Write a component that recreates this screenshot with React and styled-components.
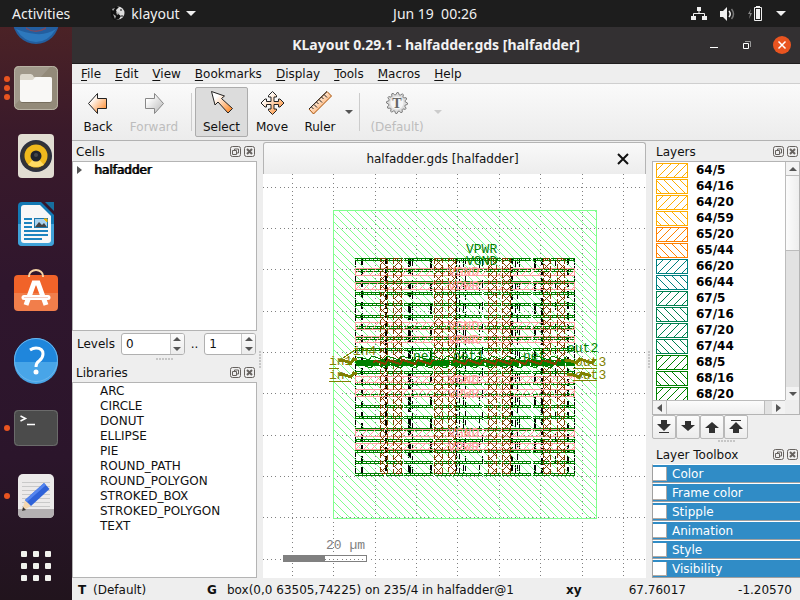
import React from "react";
import styled, { createGlobalStyle, css } from "styled-components";

const Global = createGlobalStyle`
  *, *::before, *::after { box-sizing: border-box; }
  html, body, #root { height: 100%; }
  body { margin: 0; overflow: hidden; background: #eeeeee; color: #111; font: 12px/16px "DejaVu Sans", sans-serif; }
  button, input { font: inherit; color: inherit; margin: 0; padding: 0; border: 0; background: none; }
  ul { margin: 0; padding: 0; list-style: none; }
  svg { display: block; flex: none; }
`;

/* ---------- frame ---------- */
const Screen = styled.div`
  display: flex;
  flex-direction: column;
  height: 100vh;
`;
const TopBar = styled.header`
  display: grid;
  grid-template-columns: 1fr auto 1fr;
  align-items: center;
  flex: none;
  height: 27px;
  padding: 0 14px 0 12px;
  background: #1d1d1d;
  color: #f0f0f0;
  font: 14px/20px "Noto Sans", sans-serif;
`;
const BarGroup = styled.div`
  display: flex;
  align-items: center;
  justify-content: ${(p) => (p.$end ? "flex-end" : "flex-start")};
  gap: ${(p) => (p.$end ? "13px" : "40px")};
`;
const BarButton = styled.button`
  display: flex;
  align-items: center;
  gap: 6px;
  white-space: pre;
`;
/* The clock is centred over the work area, which starts right of the dock. */
const Clock = styled(BarButton)`
  margin-left: 72px;
`;
const Desktop = styled.div`
  display: flex;
  flex: 1;
  min-height: 0;
`;
const Dock = styled.nav`
  flex: none;
  width: 72px;
  overflow: hidden;
  background: linear-gradient(#4b2226, #3a1a2a 18%, #2f162d 45%, #2b152b 75%, #21141d);
`;
const DockItem = styled.button`
  display: flex;
  align-items: center;
  width: 72px;
  height: 68px;
`;
const DockPeek = styled.button`
  display: flex;
  width: 72px;
  height: 27px;
  padding-left: 12px;
  overflow: hidden;
`;
const Running = styled.span`
  display: flex;
  flex-direction: column;
  align-items: flex-end;
  gap: 3px;
  width: 10px;
  margin-right: 2px;
`;
const Dot = styled.i`
  width: 6px;
  height: 6px;
  border-radius: 50%;
  background: #e95420;
`;
const Window = styled.main`
  display: flex;
  flex-direction: column;
  flex: 1;
  min-width: 0;
  background: #eeeeee;
`;
const TitleBar = styled.div`
  display: grid;
  grid-template-columns: 1fr auto 1fr;
  align-items: center;
  flex: none;
  height: 37px;
  padding: 0 9px;
  background: #333032;
  border-bottom: 1px solid #1e1c1d;
  color: #f2f2f2;
`;
const Title = styled.h1`
  grid-column: 2;
  margin: 0;
  font: bold 14px/20px "Noto Sans", sans-serif;
`;
const WindowButtons = styled.div`
  display: flex;
  align-items: center;
  justify-content: flex-end;
  gap: 19px;
`;

/* ---------- menu and toolbar ---------- */
const MenuBar = styled.nav`
  display: flex;
  flex: none;
  height: 20px;
  padding-left: 2px;
  border-bottom: 1px solid #cfcfcf;
`;
const MenuButton = styled.button`
  padding: 0 7px;
  line-height: 18px;
  u { text-underline-offset: 2px; }
`;
const ToolBar = styled.div`
  display: flex;
  flex: none;
  align-items: center;
  height: 57px;
  padding-left: 2px;
  background: linear-gradient(#fafafa, #ececec);
  border-bottom: 1px solid #b2b2b2;
`;
const ToolButton = styled.button`
  display: flex;
  flex-direction: column;
  align-items: center;
  gap: 3px;
  width: ${(p) => p.$w}px;
  height: 50px;
  padding-top: 2px;
  border: 1px solid transparent;
  border-radius: 2px;
  white-space: nowrap;
  ${(p) => p.$on && css`background: #dcdcdc; border-color: #acacac;`}
  ${(p) => p.disabled && css`color: #bdbdbd;`}
`;
const DropButton = styled.button`
  display: flex;
  align-items: center;
  justify-content: center;
  width: ${(p) => p.$w}px;
  height: 50px;
`;
const Divider = styled.i`
  width: 1px;
  height: 38px;
  margin: 0 ${(p) => p.$right}px 0 5px;
  background: #cccccc;
`;

/* ---------- docks ---------- */
const Work = styled.div`
  display: flex;
  flex: 1;
  min-height: 0;
`;
const Side = styled.aside`
  display: flex;
  flex-direction: column;
  flex: none;
  width: ${(p) => p.$w}px;
`;
const PanelHead = styled.div`
  display: flex;
  align-items: center;
  gap: 2px;
  flex: none;
  height: 20px;
  padding: 2px 1px 0 4px;
  h2 { flex: 1; margin: 0; font: inherit; }
`;
const Tree = styled.ul`
  flex: ${(p) => p.$grow};
  min-height: 0;
  overflow: hidden;
  background: #fff;
  border: 1px solid #b4b4b4;
`;
const TreeItem = styled.li`
  display: flex;
  align-items: center;
  gap: 12px;
  height: 15px;
  padding-left: ${(p) => p.$indent}px;
`;
const StrongName = styled.span`
  color: #000;
  text-shadow: 1px 0 0 #000;
`;
const Levels = styled.div`
  display: flex;
  align-items: center;
  flex: none;
  height: 26px;
  padding: 0 1px 0 5px;
  gap: 6px;
`;
const Spin = styled.span`
  display: flex;
  width: ${(p) => p.$w}px;
  height: 22px;
  overflow: hidden;
  background: #fff;
  border: 1px solid #b0b0b0;
  border-radius: 3px;
  input { flex: 1; min-width: 0; padding-left: 4px; }
`;
const SpinButtons = styled.span`
  display: flex;
  flex-direction: column;
  width: 14px;
  background: linear-gradient(#fcfcfc, #ececec);
  border-left: 1px solid #c6c6c6;
  button { display: flex; flex: 1; align-items: center; justify-content: center; }
`;
const Grip = styled.i`
  flex: none;
  align-self: center;
  width: ${(p) => (p.$v ? 3 : 17)}px;
  height: ${(p) => (p.$v ? 17 : 3)}px;
  margin: ${(p) => (p.$v ? "0" : "1px 0")};
  background: radial-gradient(circle at 1px 1px, #c6c6c6 1px, transparent 1px) 0 0 / 3px 3px;
`;
const Splitter = styled.div`
  display: flex;
  flex: none;
  justify-content: center;
  width: 6px;
`;
const Center = styled.section`
  display: flex;
  flex-direction: column;
  flex: 1;
  min-width: 0;
  padding-top: 1px;
`;
const Tab = styled.div`
  display: flex;
  align-items: center;
  flex: none;
  height: 32px;
  padding: 0 16px 0 4px;
  background: linear-gradient(#f9f9f9, #ededed);
  border: 1px solid #b4b4b4;
  border-bottom: 0;
  border-radius: 3px 3px 0 0;
  span { flex: 1; text-align: center; }
`;
const Canvas = styled.div`
  flex: 1;
  min-height: 0;
  background: #fff;
  svg { width: 100%; height: 100%; }
`;

/* ---------- layers ---------- */
const LayerBox = styled.div`
  display: grid;
  grid-template: minmax(0, 1fr) 14px / minmax(0, 1fr) 14px;
  flex: 1;
  min-height: 0;
  background: #fff;
  border: 1px solid #b4b4b4;
`;
const LayerList = styled.ul`
  min-height: 0;
  overflow: hidden;
  padding: 1px 0 0 3px;
`;
const LayerItem = styled.li`
  display: flex;
  align-items: flex-start;
  gap: 8px;
  height: 16px;
  font-weight: bold;
  line-height: 15px;
  color: #000;
`;
const ScrollBar = styled.div`
  display: flex;
  flex-direction: ${(p) => (p.$h ? "row" : "column")};
  min-width: 0;
  background: #e2e2e2;
  border: 0 solid #bcbcbc;
  border-width: ${(p) => (p.$h ? "1px 0 0" : "0 0 0 1px")};
  button { display: flex; align-items: center; justify-content: center; flex: 0 0 13px; background: #f3f3f3; }
`;
const Thumb = styled.i`
  flex: 0 0 ${(p) => p.$len};
  background: linear-gradient(${(p) => (p.$h ? "180deg" : "90deg")}, #fcfcfc, #eeeeee);
  border: 0 solid #bcbcbc;
  border-width: ${(p) => (p.$h ? "0 1px" : "1px 0")};
`;
const Track = styled.i`
  flex: 1;
`;
const Corner = styled.i`
  background: #eeeeee;
`;
const OrderButtons = styled.div`
  display: flex;
  flex: none;
  height: 24px;
  button {
    display: flex;
    align-items: center;
    justify-content: center;
    width: 24px;
    height: 24px;
    background: linear-gradient(#fcfcfc, #ececec);
    border: 1px solid #b8b8b8;
    border-radius: 2px;
  }
`;
const ToolboxRow = styled.label`
  display: flex;
  align-items: center;
  gap: 5px;
  flex: none;
  height: 19px;
  background: #308cc6;
  border: solid #a0a0a0;
  border-width: 1px 0 1px 1px;
  border-top-color: #fff;
  color: #fff;
  input {
    appearance: none;
    width: 14px;
    height: 14px;
    background: #fff;
    border: solid #b0a9a4;
    border-width: 0 1px 1px 0;
  }
`;
const StatusBar = styled.footer`
  display: grid;
  grid-template-columns: 129px minmax(0, 1fr) 60px 60px 106px;
  align-items: center;
  flex: none;
  height: 22px;
  padding: 2px 8px 0 6px;
  white-space: nowrap;
  b { display: inline-block; min-width: 15px; margin-right: 5px; }
`;
const Coordinate = styled.span`
  text-align: right;
`;
const StatusMode = styled.span`
  b { min-width: 10px; }
`;

/* ---------- small icons ---------- */
const Caret = ({ color = "#555", up, w = 8, h = 4 }) => (
  <svg width={w} height={h} viewBox="0 0 8 4" aria-hidden="true">
    <path d={up ? "M0 4L4 0L8 4z" : "M0 0h8L4 4z"} fill={color} />
  </svg>
);
const SideCaret = ({ left }) => (
  <svg width="5" height="8" viewBox="0 0 5 8" aria-hidden="true">
    <path d={left ? "M5 0v8L0 4z" : "M0 0v8l5-4z"} fill="#555" />
  </svg>
);
const HeadButton = styled.button`
  width: 12px;
  height: 12px;
`;
const FloatIcon = () => (
  <svg width="12" height="12" viewBox="0 0 12 12" fill="none" stroke="#66625f" aria-hidden="true">
    <rect x="0.5" y="0.5" width="10" height="10" rx="2" />
    <path d="M4.500 4.500v-1.500h4v4h-1.500M2.500 4.500h4v4h-4z" />
  </svg>
);
const CloseIcon = () => (
  <svg width="12" height="12" viewBox="0 0 12 12" fill="none" stroke="#66625f" aria-hidden="true">
    <rect x="0.5" y="0.5" width="10" height="10" rx="2" />
    <path d="M3 3l5 5M8 3l-5 5" strokeWidth="2" />
  </svg>
);
const Head = ({ title }) => (
  <PanelHead>
    <h2>{title}</h2>
    <HeadButton aria-label={`Float ${title}`}><FloatIcon /></HeadButton>
    <HeadButton aria-label={`Close ${title}`}><CloseIcon /></HeadButton>
  </PanelHead>
);

const GradientDefs = () => (
  <defs>
    <linearGradient id="orange" x1="0" x2="1" y1="0" y2="1">
      <stop offset="0.25" stopColor="#fff" />
      <stop offset="1" stopColor="#ff7d12" />
    </linearGradient>
    <linearGradient id="silver" x1="0" x2="1" y1="0" y2="1">
      <stop offset="0.2" stopColor="#fff" />
      <stop offset="1" stopColor="#b4b4b4" />
    </linearGradient>
  </defs>
);
const ToolSvg = ({ children }) => (
  <svg width="26" height="26" viewBox="0 0 26 26" aria-hidden="true">
    <GradientDefs />
    {children}
  </svg>
);
const gearPath = Array.from({ length: 48 }, (_, i) => {
  const a = (i * Math.PI) / 24;
  const r = i % 4 < 2 ? 10.5 : 8.4;
  return `${i ? "L" : "M"}${(13 + r * Math.sin(a)).toFixed(1)} ${(13 - r * Math.cos(a)).toFixed(1)}`;
}).join("") + "z";
const toolIcons = {
  back: <path d="M3.500 13.500l9-10v5h9v10h-9v5z" fill="url(#orange)" stroke="#222" />,
  forward: <path d="M22.500 13.500l-9-10v5h-9v10h9v5z" fill="url(#silver)" stroke="#888" />,
  select: <path d="M2.500 1.500l13 4.500-3 2.500 11 10-4.500 4.500-10-11-3 3z" fill="url(#orange)" stroke="#222" />,
  move: <path d="M13.500 1.500l4 4v1.500h-2.500v4.500h4.500v-2.500h1.500l4 4-4 4h-1.500v-2.500h-4.500v4.500h2.500v1.500l-4 4-4-4v-1.500h2.500v-4.500h-4.500v2.500h-1.500l-4-4 4-4h1.500v2.500h4.500v-4.500h-2.500v-1.500z" fill="url(#orange)" stroke="#222" />,
  ruler: (
    <g stroke="#222">
      <path d="M2 19L20 1.500l4.500 4.500-18 18z" fill="url(#orange)" stroke="#a85208" />
      <path d="M2 19L20 1.500M4.500 17l2 2M7 14.500l3 3M9.500 12l2 2M12 9.500l3 3M14.500 7l2 2M17 4.500l3 3" fill="none" />
    </g>
  ),
  text: (
    <g>
      <path d={gearPath} fill="#dedede" stroke="#7d7d7d" />
      <circle cx="13" cy="13" r="6.500" fill="#f5f5f5" />
      <text x="13" y="18" textAnchor="middle" fontFamily="Liberation Serif, serif" fontWeight="bold" fontSize="14" fill="#666">T</text>
    </g>
  ),
};

/* ---------- dock icons, each on a 48 unit square ---------- */
const DockSvg = ({ children, label }) => (
  <svg width="48" height="48" viewBox="0 0 48 48" role="img" aria-label={label}>{children}</svg>
);
const FilesIcon = () => (
  <DockSvg label="Files">
    <rect x="2" y="2" width="44" height="44" rx="5" fill="#938a79" />
    <path d="M2 42V7q0-5 5-5h32z" fill="#a0988a" />
    <rect x="2.500" y="2.500" width="43" height="43" rx="5" fill="none" stroke="#b9b2a4" />
    <path d="M8 13q0-3 3-3h8q2 0 3 3h16q2 0 2 3v20q0 3-3 3H11q-3 0-3-3z" fill="#776e5e" />
    <path d="M8 12q0-2 2-2h9q2 0 3 3h16q2 0 2 2v6H8z" fill="#ddd8cd" />
    <path d="M8 16h12q1 0 2-1.500t2-1.500h14q2 0 2 2v21q0 2-2 2H10q-2 0-2-2z" fill="#f9f8f6" />
  </DockSvg>
);
const MusicIcon = () => (
  <DockSvg label="Rhythmbox">
    <rect x="6" y="2" width="36" height="44" rx="4" fill="#e1ddd2" />
    <circle cx="24" cy="24" r="16" fill="#2b3040" />
    <circle cx="24" cy="24" r="14.500" fill="#343434" />
    <circle cx="24" cy="24" r="11.500" fill="#efb91d" />
    <path d="M24 24L16 33q8 4 16 0z" fill="#ffdc62" />
    <circle cx="24" cy="24" r="5.500" fill="#20242b" />
    <circle cx="24" cy="23" r="2" fill="#45484c" />
  </DockSvg>
);
const WriterIcon = () => (
  <DockSvg label="LibreOffice Writer">
    <path d="M10 2h19l13 13v27q0 4-4 4H10q-4 0-4-4V6q0-4 4-4z" fill="#1379b4" />
    <path d="M6 24h36v18q0 4-4 4H10q-4 0-4-4z" fill="#40a2d8" />
    <path d="M12 5h16l11 11v24q0 3-3 3H12q-3 0-3-3V8q0-3 3-3z" fill="#f7f7f7" />
    <path d="M33 2h9v9z" fill="#176f9f" />
    <path d="M12 19h8M12 23h8M12 27h8M12 31h24M12 35h24M12 39h18" stroke="#1b83bf" strokeWidth="2" />
    <rect x="22.500" y="18.500" width="13" height="9" fill="#a9d2ee" stroke="#1b78ad" />
    <path d="M23 27l4-5 3 3 2-2 3 4z" fill="#444" />
    <path d="M32 19h3v3z" fill="#f5b400" stroke="#f5b400" />
  </DockSvg>
);
const SoftwareIcon = () => (
  <DockSvg label="Ubuntu Software">
    <path d="M2 11q0-4 4-4h36q4 0 4 4v14H2z" fill="#f16329" />
    <path d="M2 25h44v14q0 4-4 4H6q-4 0-4-4z" fill="#f17e4b" />
    <path d="M17 9v-1a7 6 0 0 1 14 0v1" fill="none" stroke="#f6d3a4" strokeWidth="2" />
    <path d="M14 37l8-22h4l8 22" fill="none" stroke="#fff" strokeWidth="5" />
    <path d="M12 29.500h24" stroke="#fff" strokeWidth="5" strokeLinecap="round" />
    <path d="M12 29.500h24" stroke="#f5cfc4" strokeWidth="1" />
  </DockSvg>
);
const HelpIcon = () => (
  <DockSvg label="Help">
    <circle cx="24" cy="24" r="22" fill="#1f86dc" />
    <path d="M2 26a22 22 0 0 0 44 0z" fill="#48a5e8" />
    <circle cx="24" cy="24" r="21.500" fill="none" stroke="#6bb6ec" />
    <path d="M18 14q3-2 6-2 7 0 7 6 0 4-4 7-3 2-3 6" fill="none" stroke="#fff" strokeWidth="3" />
    <circle cx="24" cy="36" r="2.500" fill="#fff" />
  </DockSvg>
);
const TerminalIcon = () => (
  <DockSvg label="Terminal">
    <rect x="2" y="6" width="44" height="36" rx="4" fill="#4b4b4b" />
    <rect x="2.500" y="6.500" width="43" height="35" rx="4" fill="none" stroke="#6b6b6b" />
    <path d="M8.500 12l5 2.500-5 2.500M15 20.500h8" fill="none" stroke="#fff" strokeWidth="1.500" />
  </DockSvg>
);
const EditorIcon = () => (
  <DockSvg label="Text Editor">
    <rect x="6" y="2" width="36" height="44" rx="5" fill="#eceaea" />
    <path d="M6 37h36v4q0 5-5 5H11q-5 0-5-5z" fill="#b4b0b2" />
    <path d="M10 10.500h28M10 14.500h28M10 18.500h28M10 22.500h28M10 26.500h28M10 30.500h28M10 34.500h28" stroke="#c9c9c9" />
    <path d="M10 39l3-11 6 6z" fill="#f3d7b0" />
    <path d="M10 39l1-4 3 3z" fill="#333" />
    <path d="M13 28l19-17 5.500 6L19 34z" fill="#2f62d8" />
    <path d="M13 28l19-17 2 2-19 17z" fill="#5585ee" />
  </DockSvg>
);
const AppsIcon = () => (
  <DockSvg label="Show Applications">
    {[11, 23, 35].map((y) => [9, 21, 33].map((x) => (
      <rect key={`${x}-${y}`} x={x} y={y} width="6" height="6" rx="1" fill="#f2f2ee" />
    )))}
  </DockSvg>
);
const dockItems = [
  [FilesIcon, 3], [MusicIcon, 0], [WriterIcon, 0], [SoftwareIcon, 0],
  [HelpIcon, 0], [TerminalIcon, 1], [EditorIcon, 1], [AppsIcon, 0],
];

/* ---------- layout drawing ---------- */
/* One-pixel diagonal steps inside a rectangle; neighbouring shapes share the same phase. */
const hatch = (x0, y0, w, h, rising, step = 8) => {
  let d = "";
  for (let y = y0; y < y0 + h; y++)
    for (let x = x0; x < x0 + w; x++)
      if ((rising ? x + y : x - y + 800) % step === step - 1) d += `M${x} ${y + 0.5}h1`;
  return d;
};
const PITCH = 41.36;
const dots = [];
for (let k = 0; k < 9; k++)
  for (let y = 0.3; y < 403; y += PITCH / 10) dots.push(`M${Math.round(29 + k * PITCH)} ${Math.round(y) + 0.5}h1`);
for (let k = 0; k < 10; k++)
  for (let x = 0; x < 383; x += PITCH / 10) dots.push(`M${Math.round(x)} ${Math.round(12.6 + k * PITCH) + 0.5}h1`);
const gridPath = dots.join("");

const RAILS = Array.from({ length: 20 }, (_, k) => Math.round(84 + k * 11.3));
const STRAPS = [[94, 8], [108, 8], [148, 8], [162, 7], [202, 7], [215, 8], [255, 8], [269, 7]];
const METAL = [[117, 7], [130, 8], [171, 8], [185, 7], [225, 8], [239, 8], [280, 7], [294, 7]];
const GATES = [
  [92, 1, "7 1"], [98, 2, "7 4"], [122, 2, "6 3"], [145, 3, "9 2 5 7"], [149, 1, "8 3"], [167, 2, "10 13"],
  [193, 1, "9 3"], [196, 1, "5 2"], [200, 1, "9 14"], [202, 1, "6 3"], [216, 1, "5 2 3 13"], [219, 1, "8 14"],
  [248, 2, "6 3"], [252, 1, "9 14"], [254, 1, "6 4 8 5"], [256, 1, "9 14"], [271, 2, "10 13"], [278, 2, "7 3"],
  [292, 1, "8 14"], [304, 2, "7 4"], [311, 1, "7 1"],
];
const boundaryHatch = hatch(71, 37, 262, 307, false);
const strapHatch = STRAPS.map(([y, h]) => hatch(93, y + 1, 218, h - 2, true)).join("");
const metalHatch = METAL.map(([x, w]) => hatch(x + 1, 85, w - 1, 214, true) + hatch(x + 1, 85, w - 1, 214, false)).join("");
const railHatch = RAILS.map((y) => hatch(92, y + 1, 220, 1, true, 4)).join("");
const scribble = (x, y, w) => {
  let d = `M${x} ${y}`;
  for (let i = 3; i <= w; i += 3) d += `L${x + i} ${y + ((i * 7) % 5) - 2}`;
  return d;
};
const Drawing = () => (
  <svg viewBox="0 0 383 404" shapeRendering="crispEdges" role="img" aria-label="halfadder layout">
    <g fill="none">
      <path d={gridPath} stroke="#808080" />
      <path d="M20.500 381.500h83v6h-83z" stroke="#808080" />
      <path d="M20 381h42v7H20z" fill="#808080" />
      {GATES.map(([x, w, dash]) => (
        <path key={x} d={`M${x + w / 2} 84v216`} stroke="#000" strokeWidth={w} strokeDasharray={dash} />
      ))}
      <path d={`M70.500 36.500h263v308h-263z${boundaryHatch}`} stroke="#80ff8d" />
      <path d={railHatch} stroke="#008000" />
      {RAILS.map((y) => (
        <path key={y} d={`M92 ${y + 0.5}h220M92 ${y + 2.5}h220`} stroke="#008000" strokeDasharray="29 2 17 1" />
      ))}
      <path d={strapHatch} stroke="#ff9d9d" />
      {STRAPS.map(([y, h]) => (
        <rect key={y} x="92.500" y={y + 0.5} width="219" height={h - 1} stroke="#ff9d9d" />
      ))}
      <path d={metalHatch} stroke="#804000" />
      {METAL.map(([x, w]) => (
        <rect key={x} x={x + 0.5} y="84.500" width={w} height="215" stroke="#804000" strokeDasharray="5 2" />
      ))}
      <path d="M93 189.500h219" stroke="#008000" strokeWidth="5" strokeDasharray="23 2 9 1" />
      <path d={`${scribble(94, 184, 210)}${scribble(96, 192, 200)}`} stroke="#008000" />
      <path d={`${scribble(110, 188, 60)}${scribble(190, 188, 110)}`} stroke="#804000" strokeWidth="2" />
      <path d={`${scribble(76, 187, 20)}${scribble(76, 201, 18)}${scribble(302, 187, 30)}${scribble(304, 201, 26)}`} stroke="#808000" strokeWidth="3" />
      <path d="M66 194h10M66 207h22M80 184l12-8M310 194h24M310 206h24" stroke="#808000" />
    </g>
    <g fontFamily="Liberation Mono, monospace" fontSize="13">
      <g fill="#008000">
        <text x="203" y="79">VPWR</text>
        <text x="203" y="91">VGND</text>
        <text x="304" y="178">out2</text>
        <text x="150" y="186">net</text>
        <text x="190" y="186">net1</text>
        <text x="260" y="186">net</text>
      </g>
      <g fill="#808000">
        <text x="66" y="191">in1</text>
        <text x="66" y="205">in</text>
        <text x="90" y="181">in4</text>
        <text x="312" y="192">out3</text>
        <text x="312" y="205">out3</text>
      </g>
      <g fill="#ff9d9d">
        {["VGND", "VPWR"].map((name, i) => [102, 156, 210, 263].map((y) => (
          <text key={name + y} x="185" y={y + i * 14}>{name}</text>
        )))}
      </g>
      <text x="63" y="375" fill="#808080">20 µm</text>
    </g>
  </svg>
);

/* ---------- layer swatches ---------- */
const Swatch = ({ color, rising }) => (
  <svg width="32" height="15" viewBox="0 0 32 15" shapeRendering="crispEdges" aria-hidden="true">
    <path d={`M0.500 0.500h31v14h-31z${hatch(1, 1, 30, 13, rising)}`} fill="none" stroke={color} />
  </svg>
);
const layers = [
  ["64/5", "#ffae00"], ["64/16", "#ffae00"], ["64/20", "#ffae00"], ["64/59", "#ffae00"],
  ["65/20", "#ff8000"], ["65/44", "#ff8000"], ["66/20", "#008080"], ["66/44", "#008080"],
  ["67/5", "#008050"], ["67/16", "#008050"], ["67/20", "#008050"], ["67/44", "#008050"],
  ["68/5", "#008000"], ["68/16", "#008000"], ["68/20", "#008000"],
];
const libraries = ["ARC", "CIRCLE", "DONUT", "ELLIPSE", "PIE", "ROUND_PATH", "ROUND_POLYGON", "STROKED_BOX", "STROKED_POLYGON", "TEXT"];
const menus = ["File", "Edit", "View", "Bookmarks", "Display", "Tools", "Macros", "Help"];
const toolbox = ["Color", "Frame color", "Stipple", "Animation", "Style", "Visibility"];
const orderIcons = [
  ["Move to bottom", "M6 2h6v4h4l-7 7-7-7h4zM4 14h10v1H4z"],
  ["Move down", "M6 3h6v4h4l-7 6-7-6h4z"],
  ["Move up", "M6 15h6v-5h4l-7-6-7 6h4z"],
  ["Move to top", "M6 15h6v-4h4l-7-7-7 7h4zM4 2h10v1H4z"],
];

const Tool = ({ icon, label, ...rest }) => (
  <ToolButton {...rest}>
    <ToolSvg>{toolIcons[icon]}</ToolSvg>
    {label}
  </ToolButton>
);
const SpinBox = ({ w, value, label, id }) => (
  <Spin $w={w}>
    <input id={id} aria-label={label} inputMode="numeric" defaultValue={value} />
    <SpinButtons>
      <button aria-label="Increase"><Caret up /></button>
      <button aria-label="Decrease"><Caret /></button>
    </SpinButtons>
  </Spin>
);

export default function App() {
  return (
    <Screen>
      <Global />
      <TopBar>
        <BarGroup>
          <BarButton>Activities</BarButton>
          <BarButton>
            <svg width="15" height="15" viewBox="0 0 15 15" aria-hidden="true">
              <circle cx="8" cy="7" r="6.500" fill="#ddd" />
              <path d="M1 4L6 0l3 1-3 3 1 3 4 3-2 3-5 1-3-4z" fill="#111" />
              <path d="M2 3l3-1-2 3zM3 8l3 2-1 3zM6 6l4 1-3 2z" fill="#aaa" />
              <path d="M10 3h2v2h-2zM11 9h2v2h-2z" fill="#777" />
            </svg>
            klayout
            <Caret color="#eee" w={10} h={5} />
          </BarButton>
        </BarGroup>
        <Clock>Jun 19  00:26</Clock>
        <BarGroup $end>
          <svg width="16" height="14" viewBox="0 0 16 14" role="img" aria-label="Network" fill="#f0f0f0">
            <path d="M6 0h4v4H6zM0 9h5v4H0zM11 9h5v4h-5z" />
            <path d="M8 4v3M2.500 9V6.500h11V9" fill="none" stroke="#f0f0f0" />
          </svg>
          <svg width="15" height="14" viewBox="0 0 15 14" role="img" aria-label="Volume" fill="none">
            <path d="M0 4h3l4-4v14l-4-4H0z" fill="#f0f0f0" />
            <path d="M9 4q2.500 3 0 6" stroke="#f0f0f0" strokeWidth="1.500" />
            <path d="M11.500 2q4 5 0 10" stroke="#777" strokeWidth="1.500" />
          </svg>
          <svg width="15" height="15" viewBox="0 0 15 15" role="img" aria-label="Battery">
            <path d="M3 3L0 8h2l-1 5 3-6H2z" fill="#888" />
            <path d="M6.500 1.500h7v13h-7z" fill="none" stroke="#f0f0f0" />
            <path d="M8 0h4v2H8zM8 3h4v10H8z" fill="#f0f0f0" />
          </svg>
          <Caret color="#eee" w={10} h={5} />
        </BarGroup>
      </TopBar>
      <Desktop>
        <Dock>
          <DockPeek aria-label="Thunderbird">
            <svg width="48" height="24" viewBox="0 0 48 24" aria-hidden="true">
              <circle cx="24" cy="-6" r="23" fill="#235e9f" />
              <path d="M4 2q8 13 20 13T44 2q-9 6-20 5T4 2z" fill="#2d78bd" />
              <path d="M14 0q8 7 20 0v2q-10 6-20 0z" fill="#784b62" />
            </svg>
          </DockPeek>
          {dockItems.map(([Icon, running], i) => (
            <DockItem key={i}>
              <Running>{Array.from({ length: running }, (_, k) => <Dot key={k} />)}</Running>
              <Icon />
            </DockItem>
          ))}
        </Dock>
        <Window>
          <TitleBar>
            <Title>KLayout 0.29.1 - halfadder.gds [halfadder]</Title>
            <WindowButtons>
              <button aria-label="Minimize">
                <svg width="14" height="18" viewBox="0 0 14 18"><path d="M3 11h8v1H3z" fill="#fff" /></svg>
              </button>
              <button aria-label="Restore">
                <svg width="14" height="18" viewBox="0 0 14 18" fill="none">
                  <path d="M5 5.500h5.500V11" stroke="#999" />
                  <path d="M3.500 7.500h5v5h-5z" stroke="#fff" />
                </svg>
              </button>
              <button aria-label="Close">
                <svg width="18" height="18" viewBox="0 0 18 18">
                  <circle cx="9" cy="9" r="9" fill="#e95420" />
                  <path d="M5.500 5.500l7 7M12.500 5.500l-7 7" stroke="#fff" strokeWidth="1.500" />
                </svg>
              </button>
            </WindowButtons>
          </TitleBar>
          <MenuBar>
            {menus.map((m) => <MenuButton key={m}><u>{m[0]}</u>{m.slice(1)}</MenuButton>)}
          </MenuBar>
          <ToolBar>
            <Tool icon="back" label="Back" $w={48} />
            <Tool icon="forward" label="Forward" $w={64} disabled />
            <Divider $right={3} />
            <Tool icon="select" label="Select" $w={53} $on />
            <Tool icon="move" label="Move" $w={48} />
            <Tool icon="ruler" label="Ruler" $w={48} />
            <DropButton $w={10} aria-label="Ruler types"><Caret /></DropButton>
            <Divider $right={5} />
            <Tool icon="text" label="(Default)" $w={64} disabled />
            <DropButton $w={18} aria-label="Styles" disabled><Caret color="#ccc" /></DropButton>
          </ToolBar>
          <Work>
            <Side $w={185}>
              <Head title="Cells" />
              <Tree $grow={170}>
                <TreeItem $indent={4}><SideCaret /><StrongName>halfadder</StrongName></TreeItem>
              </Tree>
              <Levels>
                <label htmlFor="from-level">Levels</label>
                <SpinBox w={64} value="0" id="from-level" />
                <span>..</span>
                <SpinBox w={52} value="1" label="To level" />
              </Levels>
              <Grip />
              <Head title="Libraries" />
              <Tree $grow={196}>
                {libraries.map((l) => <TreeItem key={l} $indent={27}>{l}</TreeItem>)}
              </Tree>
            </Side>
            <Splitter><Grip $v /></Splitter>
            <Center>
              <Tab>
                <span>halfadder.gds [halfadder]</span>
                <button aria-label="Close tab">
                  <svg width="12" height="12" viewBox="0 0 12 12"><path d="M1 1l10 10M11 1L1 11" stroke="#111" strokeWidth="2" /></svg>
                </button>
              </Tab>
              <Canvas><Drawing /></Canvas>
            </Center>
            <Splitter><Grip $v /></Splitter>
            <Side $w={148}>
              <Head title="Layers" />
              <LayerBox>
                <LayerList>
                  {layers.map(([name, color], i) => (
                    <LayerItem key={name}><Swatch color={color} rising={i % 2 === 0} />{name}</LayerItem>
                  ))}
                </LayerList>
                <ScrollBar>
                  <button aria-label="Scroll up"><Caret up /></button>
                  <Thumb $len="32%" />
                  <Track />
                  <button aria-label="Scroll down"><Caret /></button>
                </ScrollBar>
                <ScrollBar $h>
                  <button aria-label="Scroll left"><SideCaret left /></button>
                  <Thumb $h $len="75%" />
                  <Track />
                  <button aria-label="Scroll right"><SideCaret /></button>
                </ScrollBar>
                <Corner />
              </LayerBox>
              <OrderButtons>
                {orderIcons.map(([name, d]) => (
                  <button key={name} aria-label={name}>
                    <svg width="18" height="18" viewBox="0 0 18 18"><path d={d} fill="#303030" /></svg>
                  </button>
                ))}
              </OrderButtons>
              <Grip />
              <Head title="Layer Toolbox" />
              {toolbox.map((t) => (
                <ToolboxRow key={t}><input type="checkbox" />{t}</ToolboxRow>
              ))}
            </Side>
          </Work>
          <StatusBar>
            <StatusMode><b>T</b>(Default)</StatusMode>
            <span><b>G</b>box(0,0 63505,74225) on 235/4 in halfadder@1</span>
            <b>xy</b>
            <Coordinate>67.76017</Coordinate>
            <Coordinate>-1.20570</Coordinate>
          </StatusBar>
        </Window>
      </Desktop>
    </Screen>
  );
}
